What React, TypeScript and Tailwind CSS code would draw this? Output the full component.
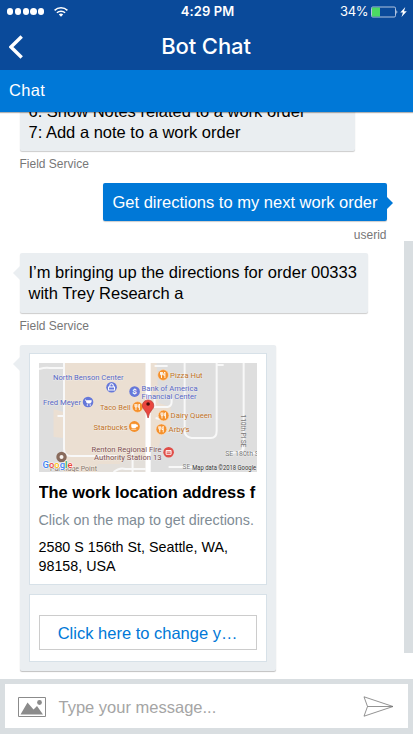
import React from "react";

type MapLabelProps = { x: number; y: number; fill: string; size?: number; width: number; children: string };

function MapLabel({ x, y, fill, size = 7.9, width, children }: MapLabelProps) {
  return (
    <text
      x={x} y={y} fill={fill} fontSize={size} textLength={width} lengthAdjust="spacingAndGlyphs"
      stroke="#fff" strokeOpacity={0.4} strokeWidth={1} paintOrder="stroke"
    >
      {children}
    </text>
  );
}

function Food({ x, y }: { x: number; y: number }) {
  return (
    <g transform={`translate(${x} ${y})`}>
      <circle r="5.4" fill="#f5902b" stroke="#fbe3c8" strokeWidth=".6" />
      <path d="M-2.6-3v2.3q0 1 1 1V3M-.7-3v2.3q0 1-1 1M-1.65-3v3M1.8 3v-6q-1.3 1-1.3 3.2h1.3" fill="none" stroke="#fff" strokeWidth=".9" />
    </g>
  );
}

function LocationMap() {
  return (
    <svg viewBox="38.5 363 218 109" className="block h-[109px] w-full font-['Roboto',sans-serif]" preserveAspectRatio="none">
      <rect x="38" y="363" width="220" height="110" fill="#dedede" />
      <path d="M63 363h82v109H63v-34l-10-1v-28l10 3z" fill="#ebdfd2" />
      <path d="M149 363h7l2 40 12 4v24l-8 2-4 14h-8z" fill="#ebdfd2" />
      <path d="M97 464h22l6-5h20v13H97z" fill="#e3dfda" />
      <g fill="none" stroke="#f8f8f8" strokeWidth="2">
        <path d="M38.5 369q7-2 11-1h14M63.500 363v86q0 7 7 7h49M57 416h6M132 452v20M113 472q6-5 12-3h20" />
        <path d="M154 366h13M154 397v9M152 407h15q4-1 4-5v-4M155 418l9 2M184 363v68q0 6 7 7h19q6 0 6-7v-68M216 365h7M243 363v86q-3 4-18 4M168 467h24M242 443v10h15" />
      </g>
      <path d="M147.500 363v109" stroke="#fff" strokeWidth="5.2" />
      <MapLabel x={52.5} y={380} fill="#5666c4" width={70.5}>North Benson Center</MapLabel>
      <MapLabel x={42.5} y={405} fill="#5666c4" width={38}>Fred Meyer</MapLabel>
      <MapLabel x={141} y={391} fill="#5666c4" width={56}>Bank of America</MapLabel>
      <MapLabel x={141} y={398.9} fill="#5666c4" width={55}>Financial Center</MapLabel>
      <g>
        <circle cx="111" cy="387.3" r="5.3" fill="#6678d9" />
        <path d="M108 387h6v3h-6zM109.3 387v-1.5a1.7 1.7 0 0 1 3.4 0v1.5" fill="none" stroke="#fff" />
        <circle cx="87.5" cy="402" r="5.3" fill="#6678d9" />
        <path d="M84.5 400h1l1 3h3.5l.8-2.3h-4.5" fill="#fff" stroke="#fff" strokeWidth=".9" />
        <circle cx="86.8" cy="405" r=".7" fill="#fff" /><circle cx="89.7" cy="405" r=".7" fill="#fff" />
        <circle cx="134" cy="391.6" r="5.3" fill="#6678d9" />
        <text x="131.8" y="394.5" fontSize="8" fontWeight="700" fill="#fff">$</text>
      </g>
      <MapLabel x={99.5} y={410.3} fill="#c0711f" width={30.5}>Taco Bell</MapLabel>
      <MapLabel x={93} y={430} fill="#c0711f" width={34}>Starbucks</MapLabel>
      <MapLabel x={169.5} y={377.7} fill="#c0711f" width={32.5}>Pizza Hut</MapLabel>
      <MapLabel x={170} y={418.4} fill="#c0711f" width={41.5}>Dairy Queen</MapLabel>
      <MapLabel x={168} y={432.2} fill="#c0711f" width={21}>Arby's</MapLabel>
      <Food x={162.5} y={375} />
      <Food x={163} y={415.5} />
      <Food x={160.8} y={429.3} />
      <Food x={137} y={407} />
      <circle cx="133.8" cy="426.5" r="5.4" fill="#f5902b" />
      <path d="M131 424.3h4.5v2.4q0 1.2-1.2 1.2h-2q-1.3 0-1.3-1.2zM135.5 425h1.4v1.6h-1.4M130.8 429.3h5" fill="#fff" stroke="#fff" strokeWidth=".6" />
      <MapLabel x={91} y={451.8} fill="#805052" width={70}>Renton Regional Fire</MapLabel>
      <MapLabel x={93.5} y={459.7} fill="#805052" width={67.5}>Authority Station 13</MapLabel>
      <circle cx="168" cy="452.3" r="5.3" fill="#e04e49" />
      <path d="M165.5 450.5h5v3.8h-5zM165.5 452h5" fill="none" stroke="#fff" strokeWidth=".9" />
      <circle cx="61" cy="457" r="5.2" fill="#896b5c" />
      <circle cx="61" cy="457" r="2" fill="#f8f3ef" />
      <MapLabel x={49.5} y={470.8} fill="#86766c" width={47}>Partridge Point</MapLabel>
      <text x="42" y="468.5" fontSize="9.8" fontWeight="500" textLength="30" lengthAdjust="spacingAndGlyphs" stroke="#fff" strokeWidth="1" paintOrder="stroke">
        <tspan fill="#4285f4">G</tspan><tspan fill="#ea4335">o</tspan><tspan fill="#fbbc05">o</tspan><tspan fill="#4285f4">g</tspan><tspan fill="#34a853">l</tspan><tspan fill="#ea4335">e</tspan>
      </text>
      <text transform="translate(240.3 414.5) rotate(90)" fontSize="6.8" fill="#777" textLength="33">110th Pl SE</text>
      <MapLabel x={224.5} y={455.8} fill="#7c7c7c" size={7.2} width={36}>SE 180th St</MapLabel>
      <MapLabel x={182} y={469.4} fill="#7c7c7c" size={7} width={7.5}>SE</MapLabel>
      <MapLabel x={191.5} y={470} fill="#333" size={6.3} width={64}>Map data ©2018 Google</MapLabel>
      <path d="M147.5 418q-1-5-3.6-8a5.7 5.7 0 1 1 7.2 0q-2.700 3-3.6 8z" fill="#ea463e" stroke="#b6332c" strokeWidth=".7" />
      <circle cx="147.500" cy="404" r="1.8" fill="#4a0f0d" />
    </svg>
  );
}

function StatusBar() {
  return (
    <div className="grid h-[23px] grid-cols-3 items-center pl-[7px] pr-[5px] font-['Inter',sans-serif] text-[13px] text-white">
      <div className="flex items-center gap-[10px]">
        <div className="flex gap-[1.6px]">
          {[0, 1, 2, 3, 4].map((dot) => <span key={dot} className="size-[6.2px] rounded-full bg-white" />)}
        </div>
        <svg viewBox="0 0 14 10" className="h-[10px] w-[14px]" fill="none" stroke="#fff" strokeWidth="1.5">
          <path d="M.6 3.400a9.200 9.200 0 0 1 12.800 0M2.900 5.800a5.900 5.900 0 0 1 8.200 0" />
          <path d="M7 9.800 4.800 7.600a3.200 3.200 0 0 1 4.400 0z" fill="#fff" stroke="none" />
        </svg>
      </div>
      <span className="text-center font-semibold tracking-[0.1px]">4:29 PM</span>
      <div className="flex items-center justify-end">
        <span className="mr-[3px] tracking-[-0.4px]">34%</span>
        <svg viewBox="0 0 37 12" className="h-[12px] w-[37px]">
          <rect x=".5" y="1" width="24" height="10" rx="1.300" fill="none" stroke="#c5d3e8" strokeWidth=".9" />
          <path d="M1 1.500h8v9H1z" fill="#4cd964" />
          <path d="M25.500 4q1.700 2 0 4z" fill="#fff" />
          <path d="m34.300 1-5 5.600h2.600L30.500 11l5.300-5.800H33z" fill="#fff" />
        </svg>
      </div>
    </div>
  );
}

function Sender({ children, className = "" }: { children: string; className?: string }) {
  return <div className={`text-[12px] leading-[16px] text-[#777] ${className}`}>{children}</div>;
}

export default function App() {
  return (
    <div className="flex h-[734px] w-[413px] flex-col overflow-hidden bg-white font-['Liberation_Sans',Arial,sans-serif] text-[16.5px] text-black">
      <header className="h-[70px] shrink-0 bg-[#0a4a9a] text-white">
        <StatusBar />
        <div className="grid h-[47px] grid-cols-[40px_1fr_41px] items-center">
          <svg viewBox="0 0 14 24" className="ml-[9px] h-[24px] w-[14px]" fill="none" stroke="#fff" strokeWidth="3.400">
            <path d="M12.700 1.500 2 12l10.700 10.500" />
          </svg>
          <h1 className="text-center font-['Inter',sans-serif] text-[22px] font-medium tracking-[-0.1px]">Bot Chat</h1>
        </div>
      </header>
      <div className="z-10 flex h-[42px] shrink-0 items-center bg-[#0078d7] pb-[2px] pl-[9px] tracking-[0.3px] text-white shadow-[0_1px_1px_rgba(0,0,0,0.3)]">Chat</div>

      <main className="flex min-h-0 flex-1">
        <div className="flex w-[404px] flex-col items-start overflow-hidden pl-[19.500px]">
          <div className="-mt-[11px] w-[335.500px] shrink-0 rounded-[2px] bg-[#eaeef1] px-[9px] pb-[8px] leading-[21px] shadow-[0_1px_1px_rgba(0,0,0,0.2)]">
            <p>6: Show Notes related to a work order</p>
            <p>7: Add a note to a work order</p>
          </div>
          <Sender className="mt-[5px]">Field Service</Sender>

          <div className="relative mr-[17.500px] mt-[11px] self-end whitespace-nowrap rounded-[2px] bg-[#0078d7] px-[9px] py-[8.500px] leading-[21px] text-white shadow-[0_1px_1px_rgba(0,0,0,0.2)]">
            Get directions to my next work order
            <svg viewBox="0 0 7 14" className="absolute -right-[6.500px] top-[12.500px] h-[14px] w-[7px]"><path d="m0 0 7 7-7 7z" fill="#0078d7" /></svg>
          </div>
          <Sender className="mr-[17.500px] mt-[6px] self-end">userid</Sender>

          <div className="relative mt-[10px] w-[348.500px] shrink-0 rounded-[2px] bg-[#eaeef1] px-[9px] py-[9px] leading-[21px] shadow-[0_1px_1px_rgba(0,0,0,0.2)]">
            I’m bringing up the directions for order 00333 with Trey Research a
            <svg viewBox="0 0 7 14" className="absolute -left-[6.500px] top-[13px] h-[14px] w-[7px]"><path d="M7 0 0 7l7 7z" fill="#eaeef1" /></svg>
          </div>
          <Sender className="mt-[5px]">Field Service</Sender>

          <div className="relative mt-[11px] flex w-[256.200px] shrink-0 flex-col gap-[9px] rounded-[2px] bg-[#eaeef1] px-[9px] pb-[9px] pt-[8px] shadow-[0_1px_1px_rgba(0,0,0,0.25)]">
            <svg viewBox="0 0 7 14" className="absolute -left-[6.500px] top-[12px] h-[14px] w-[7px]"><path d="M7 0 0 7l7 7z" fill="#eaeef1" /></svg>
            <section className="h-[232px] border border-[#d7e1e8] bg-white px-[9px] pt-[9px]">
              <LocationMap />
              <h2 className="mt-[10px] overflow-hidden whitespace-nowrap text-[16.400px] font-bold leading-[20px]">The work location address f</h2>
              <p className="mt-[8px] whitespace-nowrap text-[14.300px] leading-[20px] text-[#808c95]">Click on the map to get directions.</p>
              <p className="mt-[8px] text-[14.300px] leading-[19px]">2580 S 156th St, Seattle, WA, 98158, USA</p>
            </section>
            <section className="h-[68px] border border-[#d7e1e8] bg-white px-[9px] pt-[20px]">
              <button className="h-[35px] w-full border border-[#ccc] pt-[2px] text-[#0078d7]">Click here to change y…</button>
            </section>
          </div>
        </div>
        <div className="mt-[129px] h-[412px] w-[9px] bg-[#d9dee1]" />
      </main>

      <footer className="flex h-[55px] shrink-0 border-x-[5px] border-b-[6px] border-t-[5px] border-[#d9dee1] bg-white">
        <div className="flex flex-1 items-center pl-[13px] pt-px">
          <svg viewBox="0 0 28 20" className="h-[20px] w-[28px]">
            <path d="M.500.500h27v19H.500z" fill="none" stroke="#8b8b8b" />
            <path d="m2.500 17.500 7-12 6 7 3.500-3.500 6 8.500z" fill="#8b8b8b" />
            <circle cx="21.500" cy="5.500" r="2.400" fill="#8b8b8b" />
          </svg>
          <span className="ml-[12.500px] flex-1 pt-px text-[#a5a5a5]">Type your message...</span>
          <svg viewBox="0 0 31 21" className="mr-[14px] h-[21px] w-[31px]" fill="none" stroke="#777" strokeWidth=".8">
            <path d="M1 .8 30 10.500 1 20.200l3.500-9.700zM4.500 10.500H30" />
          </svg>
        </div>
      </footer>
    </div>
  );
}
